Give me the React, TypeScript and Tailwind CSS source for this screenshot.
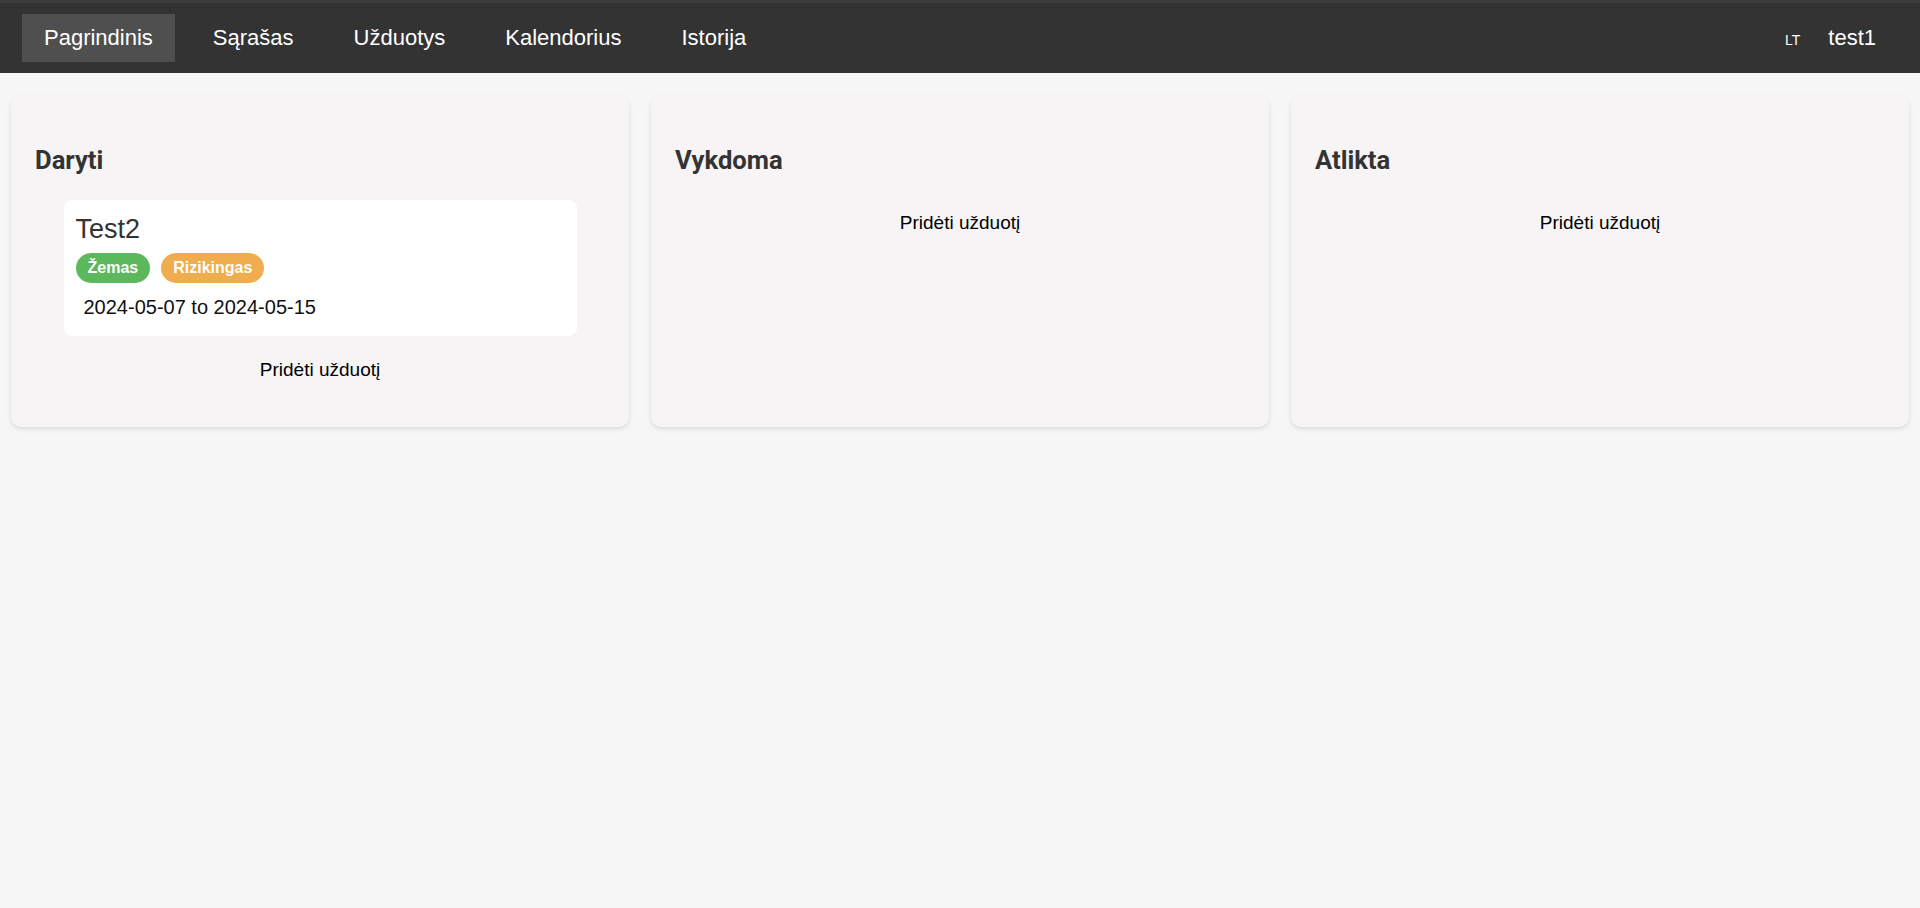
const navItems = ["Pagrindinis", "Sąrašas", "Užduotys", "Kalendorius", "Istorija"];

type Task = {
  id: number;
  title: string;
  priority: string;
  risk: string;
  from: string;
  to: string;
};

const columns: { title: string; tasks: Task[] }[] = [
  {
    title: "Daryti",
    tasks: [
      {
        id: 1,
        title: "Test2",
        priority: "Žemas",
        risk: "Rizikingas",
        from: "2024-05-07",
        to: "2024-05-15",
      },
    ],
  },
  { title: "Vykdoma", tasks: [] },
  { title: "Atlikta", tasks: [] },
];

function TaskCard({ task }: { task: Task }) {
  return (
    <div className="w-[90%] mx-auto mb-[11px] bg-white rounded-[8px] pt-[14px] pb-[17px] px-[12px]">
      <div className="text-[27px] leading-[30px] text-[#333]">{task.title}</div>
      <div className="flex gap-[11px] mt-[9px]">
        <span className="h-[30px] px-3 py-[6px] rounded-full bg-[#5cb85c] text-white font-bold text-[16px] leading-[18px]">
          {task.priority}
        </span>
        <span className="h-[30px] px-3 py-[6px] rounded-full bg-[#f0ad4e] text-white font-bold text-[16px] leading-[18px]">
          {task.risk}
        </span>
      </div>
      <div className="mt-[13px] pl-[8px] text-[20px] leading-[23px] text-[#111]">
        {task.from} to {task.to}
      </div>
    </div>
  );
}

export default function App() {
  return (
    <div className="min-h-screen bg-[#f7f7f7] font-['Liberation_Sans',Arial,sans-serif]">
      {/* top navigation */}
      <nav className="flex items-center h-[73px] border-t-[3px] border-[#3c3c3c] bg-[#333333] px-[22px] text-white">
        <div className="flex gap-[16px]">
          {navItems.map((item, i) => (
            <a
              key={item}
              className={
                "px-[22px] py-[12px] text-[22px] leading-[24px] cursor-pointer " +
                (i === 0 ? "bg-[#4f4f4f]" : "")
              }
            >
              {item}
            </a>
          ))}
        </div>
        <div className="ml-auto flex items-baseline">
          <span className="text-[14px] mr-[6px]">LT</span>
          <a className="px-[22px] py-[12px] text-[22px] leading-[24px] cursor-pointer">test1</a>
        </div>
      </nav>

      {/* board */}
      <main className="flex gap-[22px] px-[11px] pt-[22px]">
        {columns.map((col) => (
          <section
            key={col.title}
            className="flex-1 flex flex-col p-6 rounded-[10px] bg-[#f6f4f5] shadow-[0_2px_5px_rgba(0,0,0,0.12)]"
          >
            <h2 className="mt-[26px] mb-[25px] font-['Roboto',sans-serif] font-bold text-[25.6px] leading-[30px] text-[#333]">
              {col.title}
            </h2>
            <div>
              {col.tasks.map((t) => (
                <TaskCard key={t.id} task={t} />
              ))}
            </div>
            <button className="mt-[12px] mb-[22px] text-center text-[19px] leading-[22px] text-black cursor-pointer">
              Pridėti užduotį
            </button>
          </section>
        ))}
      </main>
    </div>
  );
}
